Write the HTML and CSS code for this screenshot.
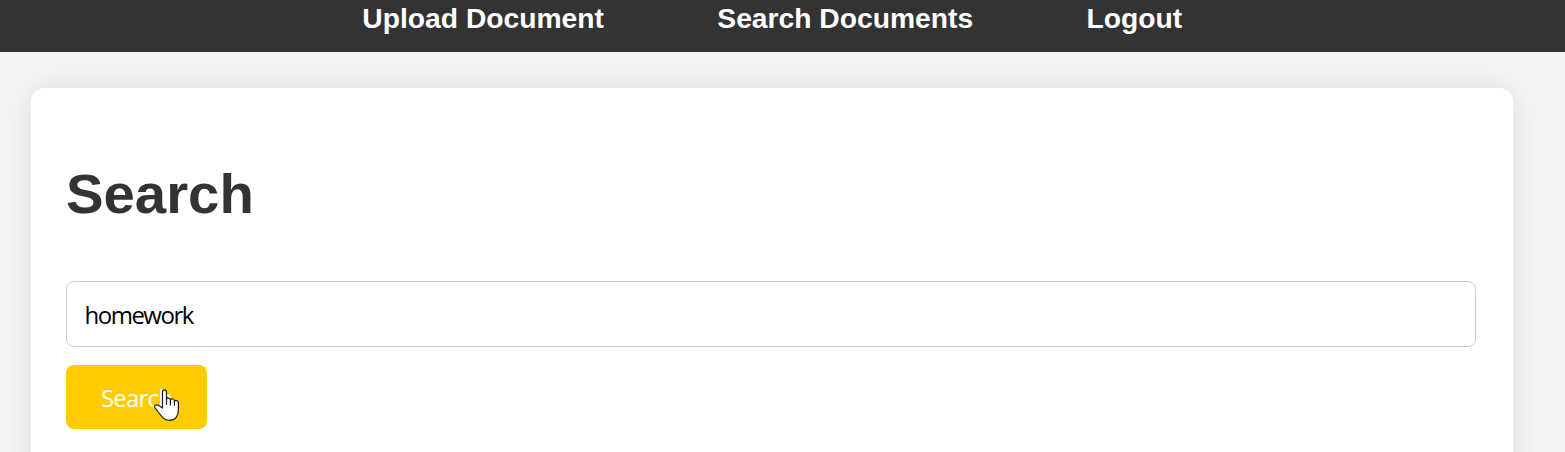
FILE: index.html
```html
<!DOCTYPE html>
<html lang="en">
<head>
<meta charset="utf-8">
<title>Search Documents</title>
<link rel="stylesheet" href="styles.css">
</head>
<body>
<nav class="navbar">
  <a class="nav-link" href="#">Upload Document</a>
  <a class="nav-link" href="#">Search Documents</a>
  <a class="nav-link" href="#">Logout</a>
</nav>
<main class="container">
  <h1 class="title">Search</h1>
  <form class="search-form">
    <input class="search-input" type="text" value="homework">
    <button class="search-button" type="button"><span class="label">Search</span>
      <svg class="pointer" width="26" height="34" viewBox="0 0 26 34" aria-hidden="true">
        <path d="M8.5 20V4.2C8.5 1 12.5 1 12.5 4.2V11.3C13.2 9.3 16.2 9.6 16.4 11.8C17.4 10.2 20.2 10.8 20.4 13C21.5 11.8 24.4 12.2 24.4 15V22C24.4 27.8 21.5 32.4 15.5 32.4C11 32.4 8.6 30 6.6 27L.8 19.5C-.2 17.5 2.2 16 4.3 17.3Z" fill="#fff" stroke="#1c1c1c" stroke-width="1.2" stroke-linejoin="round"/>
        <path d="M12.5 11V16.5M16.4 11.8V17M20.4 13V17.3" fill="none" stroke="#1c1c1c" stroke-width="1.2" stroke-linecap="round"/>
      </svg>
    </button>
  </form>
</main>
</body>
</html>
```
FILE: styles.css
```css
* { box-sizing: border-box; }
body {
  margin: 0;
  height: 452px;
  overflow: hidden;
  background: #f4f4f4;
  font-family: "Liberation Sans", Arial, sans-serif;
}
.navbar {
  display: flex;
  justify-content: center;
  gap: 113.3px;
  height: 52px;
  padding: 2px 20.5px 0 0;
  background: #333;
}
.nav-link {
  color: #fff;
  font-size: 28.25px;
  font-weight: bold;
  line-height: 32px;
  text-decoration: none;
}
.container {
  width: 1482px;
  height: 420px;
  margin: 36px 0 0 31px;
  padding: 73px 37px 0 35px;
  background: #fff;
  border-radius: 14px;
  box-shadow: 0 0 34px rgba(0, 0, 0, .1);
}
.title {
  margin: 0 0 55px;
  color: #333;
  font-size: 56.3px;
  line-height: 65px;
}
.search-form {
  display: flex;
  flex-direction: column;
  align-items: flex-start;
  gap: 18px;
}
.search-input {
  width: 100%;
  height: 66px;
  padding: 0 17.5px;
  border: 1px solid #ccc;
  border-radius: 8px;
  outline: 0;
  color: #000;
  font: 24px "Open Sans", "Noto Sans", sans-serif;
  letter-spacing: -1.5px;
}
.search-button {
  position: relative;
  width: 141px;
  height: 64px;
  padding: 1px 0 0 35px;
  border: 0;
  border-radius: 8px;
  background: #fc0;
  color: #fff;
  font: 24px "Open Sans", "Noto Sans", sans-serif;
  letter-spacing: -.8px;
  text-align: left;
}
.pointer {
  position: absolute;
  left: 88px;
  top: 23px;
}
```
